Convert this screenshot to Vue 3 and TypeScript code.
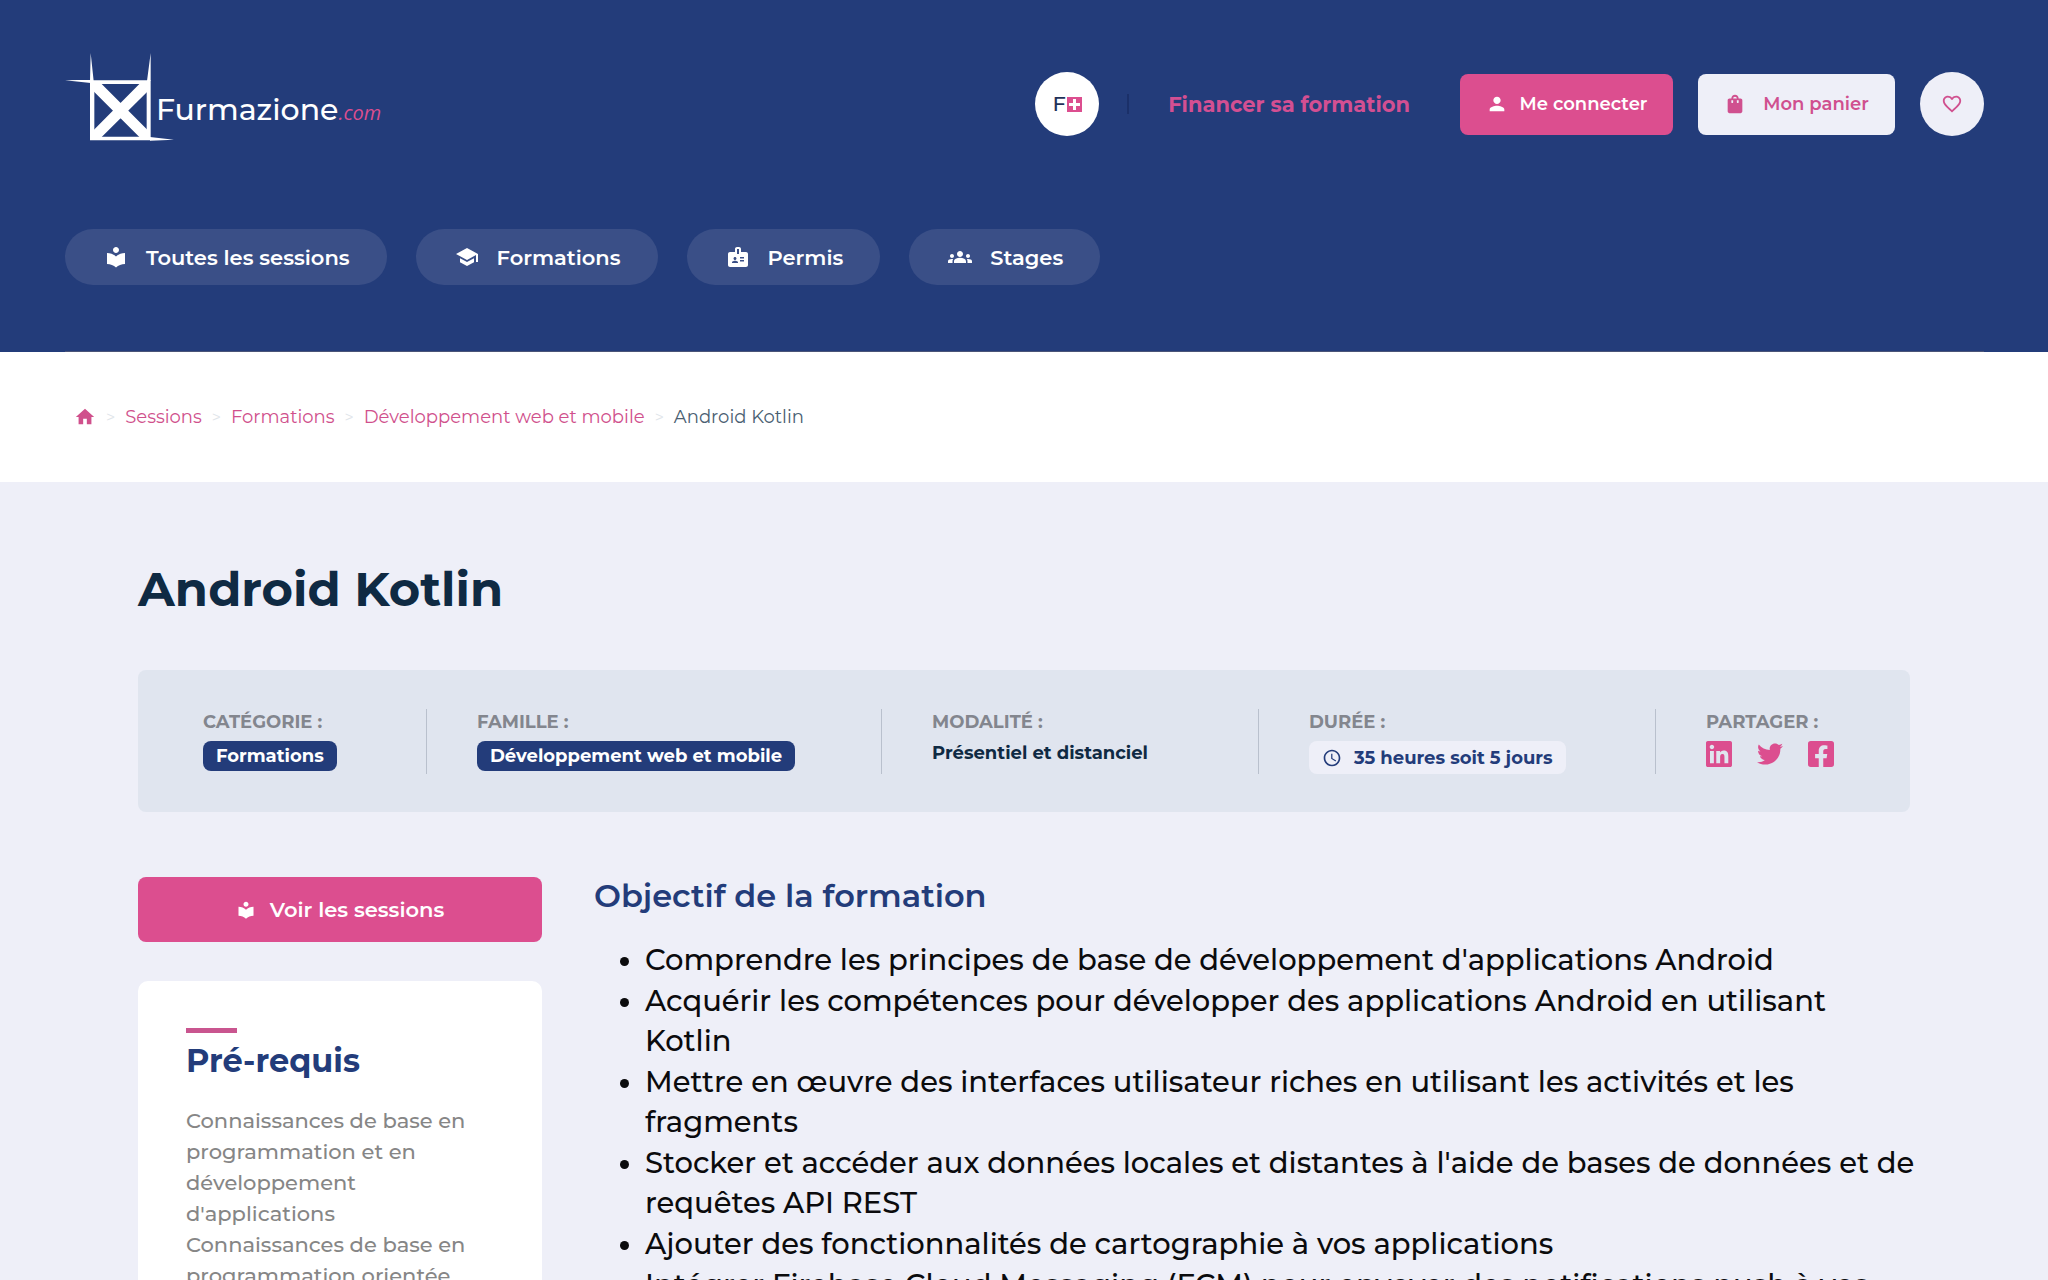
<script setup lang="ts">
interface NavItem {
  label: string
  icon: string
}

const icons = {
  library:
    'M12 11.55C9.64 9.35 6.48 8 3 8v11c3.48 0 6.64 1.35 9 3.55 2.36-2.19 5.52-3.55 9-3.55V8c-3.48 0-6.64 1.35-9 3.55zM12 8c1.66 0 3-1.34 3-3s-1.34-3-3-3-3 1.34-3 3 1.34 3 3 3z',
  school: 'M5 13.18v4L12 21l7-3.82v-4L12 17l-7-3.82zM12 3L1 9l11 6 9-4.91V17h2V9L12 3z',
  badge:
    'M20 7h-5V4c0-1.1-.9-2-2-2h-2c-1.1 0-2 .9-2 2v3H4c-1.1 0-2 .9-2 2v11c0 1.1.9 2 2 2h16c1.1 0 2-.9 2-2V9c0-1.1-.9-2-2-2zM9 12c.83 0 1.5.67 1.5 1.5S9.83 15 9 15s-1.5-.67-1.5-1.5S8.17 12 9 12zm3 6H6v-.75c0-1 2-1.5 3-1.5s3 .5 3 1.5V18zm1-9h-2V4h2v5zm5 7.5h-4V15h4v1.5zm0-3h-4V12h4v1.5z',
  groups:
    'M12 12.75c1.63 0 3.07.39 4.24.9 1.08.48 1.76 1.56 1.76 2.73V18H6v-1.61c0-1.18.68-2.26 1.76-2.73 1.17-.52 2.61-.91 4.24-.91zM4 13c1.1 0 2-.9 2-2s-.9-2-2-2-2 .9-2 2 .9 2 2 2zm1.13 1.1c-.37-.06-.74-.1-1.13-.1-.99 0-1.93.21-2.78.58C.48 14.9 0 15.62 0 16.43V18h4.5v-1.61c0-.83.23-1.61.63-2.29zM20 13c1.1 0 2-.9 2-2s-.9-2-2-2-2 .9-2 2 .9 2 2 2zm4 3.43c0-.81-.48-1.53-1.22-1.85-.85-.37-1.79-.58-2.78-.58-.39 0-.76.04-1.13.1.4.68.63 1.46.63 2.29V18H24v-1.57zM12 6c1.66 0 3 1.34 3 3s-1.34 3-3 3-3-1.34-3-3 1.34-3 3-3z',
}

const navItems: NavItem[] = [
  { label: 'Toutes les sessions', icon: icons.library },
  { label: 'Formations', icon: icons.school },
  { label: 'Permis', icon: icons.badge },
  { label: 'Stages', icon: icons.groups },
]

const crumbs: string[] = ['Sessions', 'Formations', 'Développement web et mobile']

const prerequisites: string[] = [
  "Connaissances de base en programmation et en développement d'applications",
  'Connaissances de base en programmation orientée',
]

const objectives: string[] = [
  "Comprendre les principes de base de développement d'applications Android",
  'Acquérir les compétences pour développer des applications Android en utilisant Kotlin',
  'Mettre en œuvre des interfaces utilisateur riches en utilisant les activités et les fragments',
  "Stocker et accéder aux données locales et distantes à l'aide de bases de données et de requêtes API REST",
  'Ajouter des fonctionnalités de cartographie à vos applications',
  'Intégrer Firebase Cloud Messaging (FCM) pour envoyer des notifications push à vos',
]
</script>

<template>
  <div class="page">
    <header class="header">
      <div class="topbar">
        <a href="#" class="logo" aria-label="Furmazione.com">
          <svg class="logo-mark" viewBox="75 68 330 264" fill="#fff" aria-hidden="true">
            <path
              fill-rule="evenodd"
              d="M150 150H332V330H150zM163 161V319H320V161z"
            />
            <path d="M156 155H179L328 304V326H304L156 178zM328 155V178L179 326H156V304L304 155z" />
            <path d="M150 152L152 68L161 152zM321 152L332 68V152zM75 150L152 148V158zM330 320L402 328L330 331z" />
          </svg>
          <span class="logo-word">
            <span class="logo-name">Furmazione</span><span class="logo-tld">.com</span>
          </span>
        </a>
        <div class="actions">
          <a href="#" class="round plus" aria-label="F+">
            <span>F</span>
            <svg viewBox="0 0 15 15" class="plus-icon" aria-hidden="true">
              <rect width="15" height="15" fill="#dc4e8f" />
              <path d="M6 2h3v4h4v3H9v4H6V9H2V6h4z" fill="#fff" />
            </svg>
          </a>
          <span class="separator"></span>
          <a href="#" class="finance">Financer sa formation</a>
          <button type="button" class="btn login">
            <svg viewBox="0 0 24 24" class="icon" aria-hidden="true">
              <path d="M12 12c2.21 0 4-1.79 4-4s-1.79-4-4-4-4 1.79-4 4 1.79 4 4 4zm0 2c-2.67 0-8 1.34-8 4v2h16v-2c0-2.66-5.33-4-8-4z" />
            </svg>
            Me connecter
          </button>
          <button type="button" class="btn cart">
            <svg viewBox="0 0 24 24" class="icon" aria-hidden="true">
              <path
                d="M18 6h-2c0-2.2-1.8-4-4-4S8 3.800 8 6H6c-1.100 0-2 .9-2 2v12c0 1.100.9 2 2 2h12c1.100 0 2-.9 2-2V8c0-1.100-.9-2-2-2zM10 10c0 .55-.45 1-1 1s-1-.45-1-1V8h2zM12 4c1.100 0 2 .9 2 2h-4c0-1.100.9-2 2-2zM16 10c0 .55-.45 1-1 1s-1-.45-1-1V8h2z"
              />
            </svg>
            Mon panier
          </button>
          <button type="button" class="round heart" aria-label="Favoris">
            <svg viewBox="0 0 24 24" class="icon" aria-hidden="true">
              <path d="M16.5 3c-1.74 0-3.41.81-4.5 2.09C10.91 3.81 9.24 3 7.5 3 4.42 3 2 5.42 2 8.5c0 3.78 3.4 6.86 8.55 11.54L12 21.35l1.45-1.32C18.6 15.36 22 12.28 22 8.5 22 5.42 19.58 3 16.5 3zm-4.4 15.55l-.1.1-.1-.1C7.14 14.24 4 11.39 4 8.5 4 6.5 5.5 5 7.5 5c1.54 0 3.04.99 3.57 2.36h1.87C13.46 5.99 14.96 5 16.5 5c2 0 3.5 1.5 3.5 3.5 0 2.89-3.14 5.74-7.9 10.05z" />
            </svg>
          </button>
        </div>
      </div>
      <nav class="nav">
        <a v-for="item in navItems" :key="item.label" href="#" class="pill">
          <svg viewBox="0 0 24 24" class="icon" aria-hidden="true"><path :d="item.icon" /></svg>
          {{ item.label }}
        </a>
      </nav>
    </header>

    <nav class="breadcrumb" aria-label="Fil d'Ariane">
      <a href="#" class="home" aria-label="Accueil">
        <svg viewBox="0 0 24 24" class="icon" aria-hidden="true">
          <path d="M10 20v-6h4v6h5v-8h3L12 3 2 12h3v8z" />
        </svg>
      </a>
      <template v-for="crumb in crumbs" :key="crumb">
        <span class="chevron">&gt;</span>
        <a href="#">{{ crumb }}</a>
      </template>
      <span class="chevron">&gt;</span>
      <span class="current">Android Kotlin</span>
    </nav>

    <main class="main">
      <h1>Android Kotlin</h1>

      <section class="info">
        <div class="cell">
          <span class="label">CATÉGORIE :</span>
          <span class="tag">Formations</span>
        </div>
        <div class="cell">
          <span class="label">FAMILLE :</span>
          <span class="tag">Développement web et mobile</span>
        </div>
        <div class="cell">
          <span class="label">MODALITÉ :</span>
          <span class="value">Présentiel et distanciel</span>
        </div>
        <div class="cell">
          <span class="label">DURÉE :</span>
          <span class="tag light">
            <svg viewBox="0 0 24 24" class="icon" aria-hidden="true">
              <path d="M11.99 2C6.47 2 2 6.48 2 12s4.470 10 9.990 10C17.520 22 22 17.520 22 12S17.520 2 11.990 2zM12 20c-4.420 0-8-3.580-8-8s3.580-8 8-8 8 3.580 8 8-3.580 8-8 8zm.5-13H11v6l5.250 3.150.75-1.230-4.500-2.670z" />
            </svg>
            35 heures soit 5 jours
          </span>
        </div>
        <div class="cell">
          <span class="label">PARTAGER :</span>
          <div class="share">
            <a href="#" aria-label="LinkedIn">
              <svg viewBox="0 32 448 448" class="icon"><path d="M416 32H31.9C14.3 32 0 46.5 0 64.3v383.400C0 465.500 14.3 480 31.9 480H416c17.600 0 32-14.500 32-32.300V64.300c0-17.800-14.400-32.300-32-32.300zM135.400 416H69V202.200h66.500V416zm-33.200-243c-21.300 0-38.500-17.300-38.500-38.500S80.900 96 102.200 96c21.200 0 38.500 17.300 38.500 38.500 0 21.300-17.200 38.500-38.500 38.500zm282.100 243h-66.400V312c0-24.800-.5-56.700-34.500-56.700-34.600 0-39.900 27-39.900 54.900V416h-66.400V202.200h63.700v29.200h.9c8.900-16.800 30.600-34.500 62.900-34.500 67.200 0 79.700 44.300 79.700 101.900V416z" /></svg>
            </a>
            <a href="#" aria-label="Twitter">
              <svg viewBox="0 0 512 512" class="icon"><path d="M459.370 151.716c.325 4.548.325 9.097.325 13.645 0 138.720-105.583 298.558-298.558 298.558-59.452 0-114.680-17.219-161.137-47.106 8.447.974 16.568 1.299 25.340 1.299 49.055 0 94.213-16.568 130.274-44.832-46.132-.975-84.792-31.188-98.112-72.772 6.498.974 12.995 1.624 19.818 1.624 9.421 0 18.843-1.300 27.614-3.573-48.081-9.747-84.143-51.980-84.143-102.985v-1.299c13.969 7.797 30.214 12.670 47.431 13.319-28.264-18.843-46.781-51.005-46.781-87.391 0-19.492 5.197-37.360 14.294-52.954 51.655 63.675 129.300 105.258 216.365 109.807-1.624-7.797-2.599-15.918-2.599-24.040 0-57.828 46.782-104.934 104.934-104.934 30.213 0 57.502 12.670 76.670 33.137 23.715-4.548 46.456-13.320 66.599-25.340-7.798 24.366-24.366 44.833-46.132 57.827 21.117-2.273 41.584-8.122 60.426-16.243-14.292 20.791-32.161 39.308-52.628 54.253z" /></svg>
            </a>
            <a href="#" aria-label="Facebook">
              <svg viewBox="0 32 448 448" class="icon"><path d="M400 32H48A48 48 0 0 0 0 80v352a48 48 0 0 0 48 48h137.250V327.690h-63V256h63v-54.640c0-62.150 37-96.480 93.670-96.480 27.140 0 55.520 4.840 55.520 4.840v61h-31.270c-30.810 0-40.420 19.120-40.420 38.730V256h68.780l-11 71.690h-57.780V480H400a48 48 0 0 0 48-48V80a48 48 0 0 0-48-48z" /></svg>
            </a>
          </div>
        </div>
      </section>

      <div class="columns">
        <aside class="side">
          <button type="button" class="sessions">
            <svg viewBox="0 0 24 24" class="icon" aria-hidden="true"><path :d="icons.library" /></svg>
            Voir les sessions
          </button>
          <section class="card">
            <h2>Pré-requis</h2>
            <p v-for="text in prerequisites" :key="text">{{ text }}</p>
          </section>
        </aside>
        <section class="content">
          <h2>Objectif de la formation</h2>
          <ul>
            <li v-for="goal in objectives" :key="goal">{{ goal }}</li>
          </ul>
        </section>
      </div>
    </main>
  </div>
</template>

<style>
body {
  background: #eeeff8;
}
</style>

<style scoped>
.page {
  height: 100vh;
  overflow: hidden;
  background: #eeeff8;
  color: #0f2a43;
  font-family: Montserrat, Inter, "Liberation Sans", sans-serif;
  font-size: 18px;
  font-weight: 500;
}
.page *,
.page *::before {
  box-sizing: border-box;
}
a {
  color: #dc4e8f;
  text-decoration: none;
}
button {
  border: 0;
  font-family: inherit;
}
.icon {
  display: block;
  flex: none;
  width: 22px;
  height: 22px;
  fill: currentColor;
}
.header {
  padding: 53px 64px 0 65px;
  background: #233c7a;
}
.header::after {
  display: block;
  height: 1px;
  margin-top: 66px;
  background: #4a5478;
  content: "";
}
.topbar {
  display: flex;
  align-items: center;
  justify-content: space-between;
  height: 102px;
}
.logo {
  display: flex;
  align-items: flex-start;
  align-self: flex-start;
}
.logo-mark {
  width: 110px;
  height: 88px;
}
.logo-word {
  display: flex;
  align-items: baseline;
  margin: 37px 0 0 -19px;
}
.logo-name {
  color: #fff;
  font-size: 30px;
  line-height: 40px;
}
.logo-tld {
  font-family: "Open Sans", sans-serif;
  font-size: 20px;
  font-style: italic;
  font-weight: 400;
  line-height: 24px;
}
.actions {
  display: flex;
  align-items: center;
}
.round {
  display: flex;
  align-items: center;
  justify-content: center;
  width: 64px;
  height: 64px;
  border-radius: 50%;
  padding: 0;
}
.plus {
  gap: 1px;
  background: #fff;
  color: #1f3158;
  font-size: 21px;
  line-height: 24px;
}
.plus-icon {
  width: 15px;
  height: 15px;
}
.separator {
  width: 2px;
  height: 20px;
  margin: 0 39px 0 28px;
  background: #1b3069;
}
.finance {
  margin-right: 50px;
  color: #d34f92;
  font-size: 21px;
  font-weight: 700;
}
.btn {
  display: flex;
  align-items: center;
  justify-content: center;
  height: 61px;
  margin-right: 25px;
  border-radius: 8px;
  font-size: 18px;
  font-weight: 600;
}
.login {
  gap: 12px;
  min-width: 213px;
  background: #dc4e8f;
  color: #fff;
}
.cart {
  gap: 17px;
  min-width: 197px;
  background: #eeeff8;
  color: #d0508f;
}
.heart {
  background: #eeeff8;
  color: #d0508f;
}
.nav {
  display: flex;
  gap: 29px;
  margin-top: 74px;
}
.pill {
  display: flex;
  align-items: center;
  gap: 18px;
  height: 56px;
  padding: 0 37px 0 39px;
  border-radius: 28px;
  background: #3a4f87;
  color: #fff;
  font-size: 21px;
  font-weight: 600;
}
.pill .icon {
  width: 24px;
  height: 24px;
}
.breadcrumb {
  display: flex;
  align-items: center;
  gap: 10px;
  height: 130px;
  padding: 0 74px;
  background: #fff;
  font-weight: 450;
}
.breadcrumb a {
  color: #d0508c;
}
.chevron {
  color: #dfe5ea;
  font-size: 16px;
}
.current {
  color: #4a6072;
}
.main {
  padding: 77px 138px 0;
}
h1,
h2,
p,
ul {
  margin: 0;
}
h1 {
  font-size: 48px;
  font-weight: 700;
  line-height: 60px;
}
.info {
  display: grid;
  grid-template-columns: 223fr 455fr 377fr 397fr 190fr;
  margin-top: 51px;
  padding: 39px 65px 38px;
  border-radius: 8px;
  background: #e0e5ef;
}
.cell {
  display: flex;
  flex-direction: column;
  align-items: flex-start;
  height: 65px;
  padding-left: 50px;
  border-left: 1px solid #b9c0cd;
}
.cell:first-child {
  padding-left: 0;
  border-left: 0;
}
.label {
  margin-bottom: 6px;
  color: #83868e;
  font-size: 18px;
  font-weight: 700;
  line-height: 26px;
  white-space: nowrap;
}
.tag,
.value {
  font-weight: 700;
  font-size: 18px;
  line-height: 24px;
  white-space: nowrap;
}
.tag {
  display: flex;
  align-items: center;
  gap: 12px;
  height: 30px;
  padding: 0 13px;
  border-radius: 8px;
  background: #233c7a;
  color: #fff;
}
.light {
  height: 33px;
  background: #eeeff8;
  color: #233c7a;
}
.light .icon {
  width: 20px;
  height: 20px;
}
.share {
  display: flex;
  gap: 25px;
}
.share .icon {
  width: 26px;
  height: 26px;
}
.columns {
  display: flex;
  gap: 52px;
  margin-top: 65px;
}
.side {
  flex: 0 0 404px;
}
.sessions {
  display: flex;
  align-items: center;
  justify-content: center;
  gap: 14px;
  width: 100%;
  height: 65px;
  border-radius: 8px;
  background: #dc4e8f;
  color: #fff;
  font-size: 21px;
  font-weight: 600;
}
.sessions .icon {
  width: 20px;
  height: 20px;
}
.card {
  margin-top: 39px;
  padding: 47px 48px;
  border-radius: 10px;
  background: #fff;
  color: #868686;
  font-size: 21px;
  line-height: 31px;
}
.card h2 {
  margin-bottom: 24px;
  color: #233c7a;
  font-size: 32px;
  font-weight: 700;
  line-height: 40px;
}
.card h2::before {
  display: block;
  width: 51px;
  height: 5px;
  margin-bottom: 8px;
  background: #c9558f;
  content: "";
}
.content {
  flex: 1;
  min-width: 0;
}
.content h2 {
  color: #233c7a;
  font-size: 32px;
  font-weight: 600;
  line-height: 38px;
}
ul {
  margin: 25px -5px 0 0;
  padding-left: 51px;
  color: #0b0b0d;
  font-size: 29px;
  line-height: 40px;
}
li + li {
  margin-top: 1px;
}
</style>
